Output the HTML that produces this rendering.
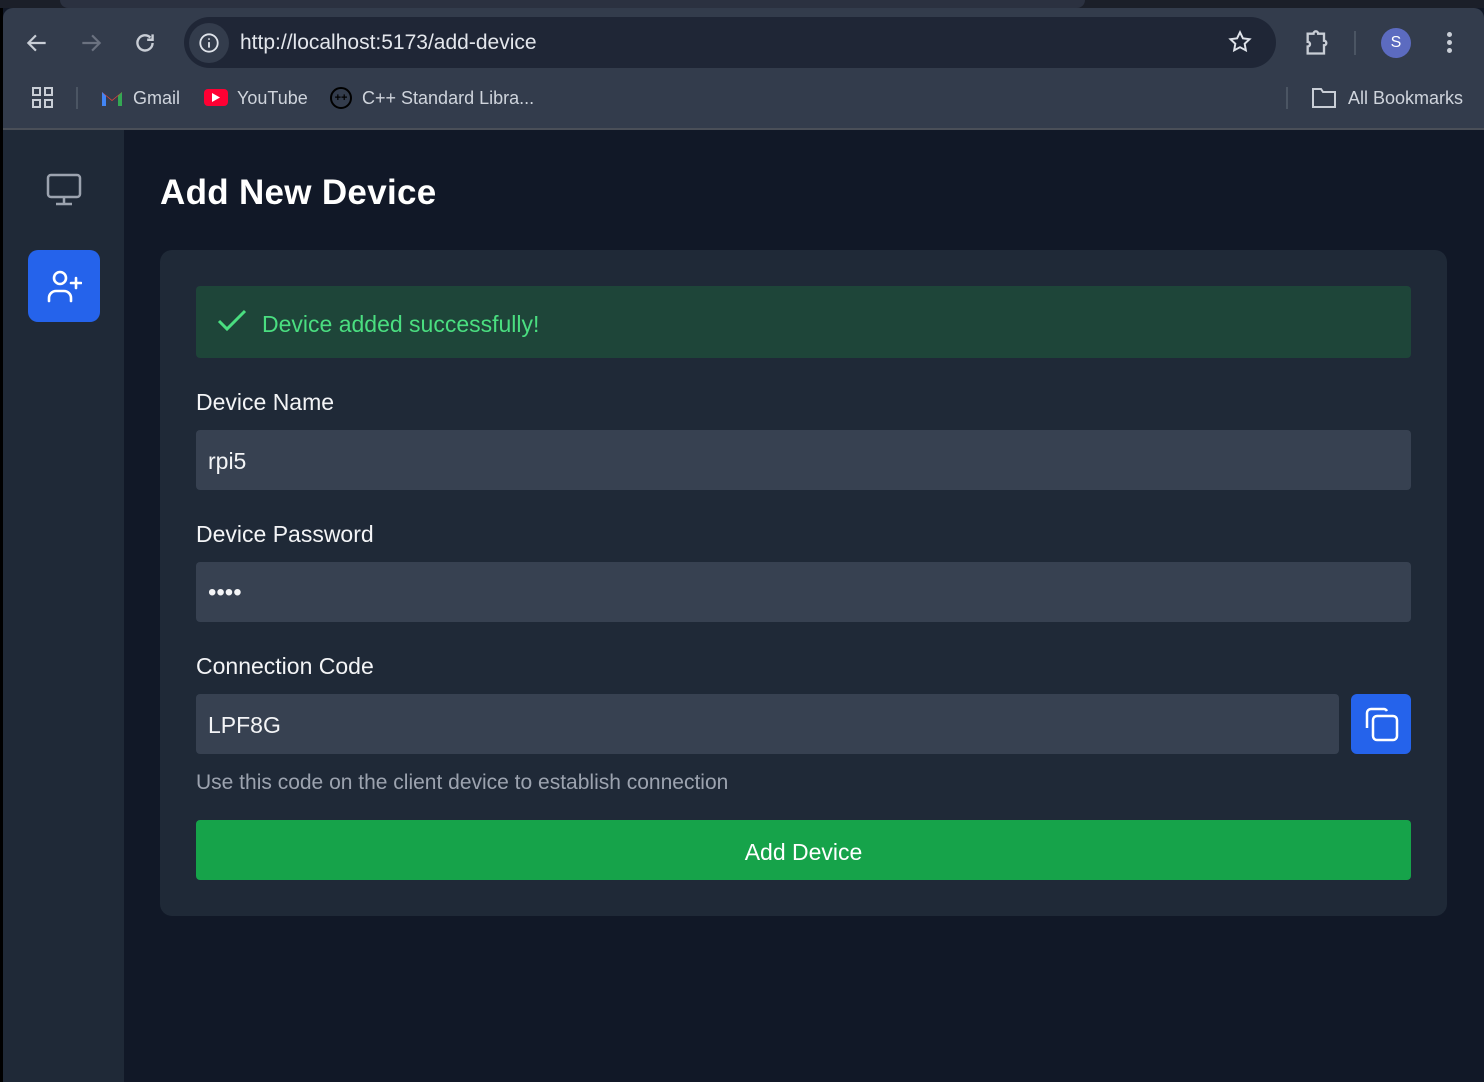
<!DOCTYPE html>
<html><head><meta charset="utf-8"><style>
*{margin:0;padding:0;box-sizing:border-box}
body{width:1484px;height:1082px;overflow:hidden;background:#111827;font-family:"Liberation Sans",sans-serif;position:relative}
.abs{position:absolute}
.top{left:0;top:0;width:1484px;height:8px;background:#1b1f29}
.tb{left:3px;top:8px;width:1481px;height:121px;background:#333c4c;border-radius:10px 10px 0 0}
.omni{left:184px;top:17px;width:1092px;height:51px;border-radius:26px;background:#1f2636}
.url{left:240px;top:31px;color:#e3e6ec;font-size:21px}
.bm{color:#cfd4dc;font-size:18px;top:88px}
.line{left:3px;top:128px;width:1481px;height:2px;background:#4a4f58}
.side{left:3px;top:130px;width:121px;height:952px;background:#1f2937}
.card{left:160px;top:250px;width:1287px;height:666px;background:#1f2937;border-radius:12px}
.alert{left:196px;top:286px;width:1215px;height:72px;background:#1e4539;border-radius:4px}
.lab{color:#f3f4f6;font-size:23px;left:196px}
.inp{left:196px;width:1215px;height:60px;background:#374151;border-radius:4px;color:#f3f4f6;font-size:23px;padding-left:12px;line-height:62px}
</style></head><body>
<div class="abs" style="left:0;top:0;width:3px;height:1082px;background:#000"></div>
<div class="abs top"></div>
<div class="abs" style="left:60px;top:0;width:1025px;height:8px;background:#2b3140;border-radius:0 0 8px 8px"></div>
<div class="abs tb"></div>
<svg class="abs" style="left:24px;top:30px" width="26" height="26" viewBox="0 0 24 24" fill="none" stroke="#c9ced6" stroke-width="2"><path d="M20 12H5M11 5l-7 7 7 7"/></svg>
<svg class="abs" style="left:78px;top:30px" width="26" height="26" viewBox="0 0 24 24" fill="none" stroke="#6b7280" stroke-width="2"><path d="M4 12h15M13 5l7 7-7 7"/></svg>
<svg class="abs" style="left:132px;top:30px" width="26" height="26" viewBox="0 0 24 24" fill="none" stroke="#c9ced6" stroke-width="2.2"><path d="M19 12a7 7 0 1 1-2-5M19 4v5h-5"/></svg>
<div class="abs omni"></div>
<div class="abs" style="left:189px;top:23px;width:40px;height:40px;border-radius:20px;background:#333c4c"></div>
<svg class="abs" style="left:198px;top:32px" width="22" height="22" viewBox="0 0 24 24" fill="none" stroke="#dfe3ea" stroke-width="2"><circle cx="12" cy="12" r="9.5"/><path d="M12 11v6M12 7v1.5"/></svg>
<div class="abs url">http://localhost:5173/add-device</div>
<svg class="abs" style="left:1227px;top:29px" width="26" height="26" viewBox="0 0 24 24" fill="none" stroke="#dfe3ea" stroke-width="1.8"><path d="M12 3l2.7 5.6 6.1.8-4.5 4.2 1.1 6.1L12 16.8 6.6 19.7l1.1-6.1L3.2 9.4l6.1-.8z"/></svg>
<svg class="abs" style="left:1303px;top:29px" width="28" height="28" viewBox="0 0 24 24" fill="none" stroke="#c9ced6" stroke-width="2"><path d="M4 4h5a2 2 0 0 1 4 0h5v6a2 2 0 0 1 0 4v7H4v-6a2 2 0 0 0 0-4z"/></svg>
<div class="abs" style="left:1354px;top:31px;width:2px;height:24px;background:#4b5563"></div>
<div class="abs" style="left:1381px;top:28px;width:30px;height:30px;border-radius:15px;background:#5c6bc0;color:#fff;font-size:16px;text-align:center;line-height:30px">S</div>
<div class="abs" style="left:1447px;top:32px;width:5px;height:5px;border-radius:3px;background:#c9ced6"></div>
<div class="abs" style="left:1447px;top:40px;width:5px;height:5px;border-radius:3px;background:#c9ced6"></div>
<div class="abs" style="left:1447px;top:48px;width:5px;height:5px;border-radius:3px;background:#c9ced6"></div>
<svg class="abs" style="left:31px;top:86px" width="24" height="24" viewBox="0 0 24 24" fill="none" stroke="#c9ced6" stroke-width="2"><rect x="2" y="2" width="7" height="7"/><rect x="14" y="2" width="7" height="7"/><rect x="2" y="14" width="7" height="7"/><rect x="14" y="14" width="7" height="7"/></svg>
<div class="abs" style="left:76px;top:87px;width:2px;height:22px;background:#4b5563"></div>
<svg class="abs" style="left:101px;top:89px" width="22" height="17" viewBox="0 0 22 17"><path d="M1 3v14h4V7l6 5 6-5v10h4V3l-10 8z" fill="#ea4335"/><path d="M1 3v14h4V7z" fill="#4285f4"/><path d="M17 7v10h4V3z" fill="#34a853"/></svg>
<div class="abs bm" style="left:133px">Gmail</div>
<div class="abs" style="left:204px;top:89px;width:24px;height:17px;border-radius:4px;background:#ff0033"></div>
<svg class="abs" style="left:212px;top:93px" width="8" height="9"><path d="M0 0l8 4.5L0 9z" fill="#fff"/></svg>
<div class="abs bm" style="left:237px">YouTube</div>
<div class="abs" style="left:330px;top:87px;width:22px;height:22px;border-radius:11px;border:2px solid #000;color:#000;font-size:11px;line-height:18px;text-align:center;font-weight:bold">++</div>
<div class="abs bm" style="left:362px">C++ Standard Libra...</div>
<div class="abs" style="left:1286px;top:87px;width:2px;height:22px;background:#4b5563"></div>
<svg class="abs" style="left:1312px;top:87px" width="24" height="22" viewBox="0 0 24 22" fill="none" stroke="#c9ced6" stroke-width="2"><path d="M1 2h8l2 3h12v15H1z"/></svg>
<div class="abs bm" style="left:1348px">All Bookmarks</div>
<div class="abs line"></div>
<div class="abs side"></div>
<svg class="abs" style="left:46px;top:173px" width="36" height="34" viewBox="0 0 36 34" fill="none" stroke="#9ca3af" stroke-width="2.5"><rect x="2" y="2" width="32" height="22" rx="3"/><path d="M18 24v6M10 31h16"/></svg>
<div class="abs" style="left:28px;top:250px;width:72px;height:72px;border-radius:10px;background:#2563eb"></div>
<svg class="abs" style="left:46px;top:268px" width="36" height="36" viewBox="0 0 36 36" fill="none" stroke="#fff" stroke-width="2.6" stroke-linecap="round"><circle cx="14" cy="10" r="6"/><path d="M3 33v-3a7 7 0 0 1 7-7h8a7 7 0 0 1 7 7v3M30 10v10M25 15h10"/></svg>
<div class="abs" style="left:160px;top:173px;color:#fff;font-size:35px;font-weight:bold;letter-spacing:0.3px">Add New Device</div>
<div class="abs card"></div>
<div class="abs alert"></div>
<svg class="abs" style="left:217px;top:309px" width="30" height="24" viewBox="0 0 30 24" fill="none" stroke="#4ade80" stroke-width="3"><path d="M2 12l8 8L28 2"/></svg>
<div class="abs" style="left:262px;top:311px;color:#4ade80;font-size:23px">Device added successfully!</div>
<div class="abs lab" style="top:389px">Device Name</div>
<div class="abs inp" style="top:430px">rpi5</div>
<div class="abs lab" style="top:521px">Device Password</div>
<div class="abs inp" style="top:562px;font-size:24px;letter-spacing:0px;line-height:62px">••••</div>
<div class="abs lab" style="top:653px">Connection Code</div>
<div class="abs inp" style="top:694px;width:1143px">LPF8G</div>
<div class="abs" style="left:1351px;top:694px;width:60px;height:60px;border-radius:6px;background:#2563eb"></div>
<svg class="abs" style="left:1363px;top:706px" width="36" height="36" viewBox="0 0 36 36" fill="none" stroke="#fff" stroke-width="2.5"><rect x="10" y="10" width="24" height="24" rx="4"/><path d="M4 22V7a4 4 0 0 1 4-4h13a4 4 0 0 1 3 2"/></svg>
<div class="abs" style="left:196px;top:771px;color:#9ca3af;font-size:21px">Use this code on the client device to establish connection</div>
<div class="abs" style="left:196px;top:820px;width:1215px;height:60px;border-radius:4px;background:#16a34a;color:#fff;font-size:23px;text-align:center;line-height:64px">Add Device</div>
</body></html>
